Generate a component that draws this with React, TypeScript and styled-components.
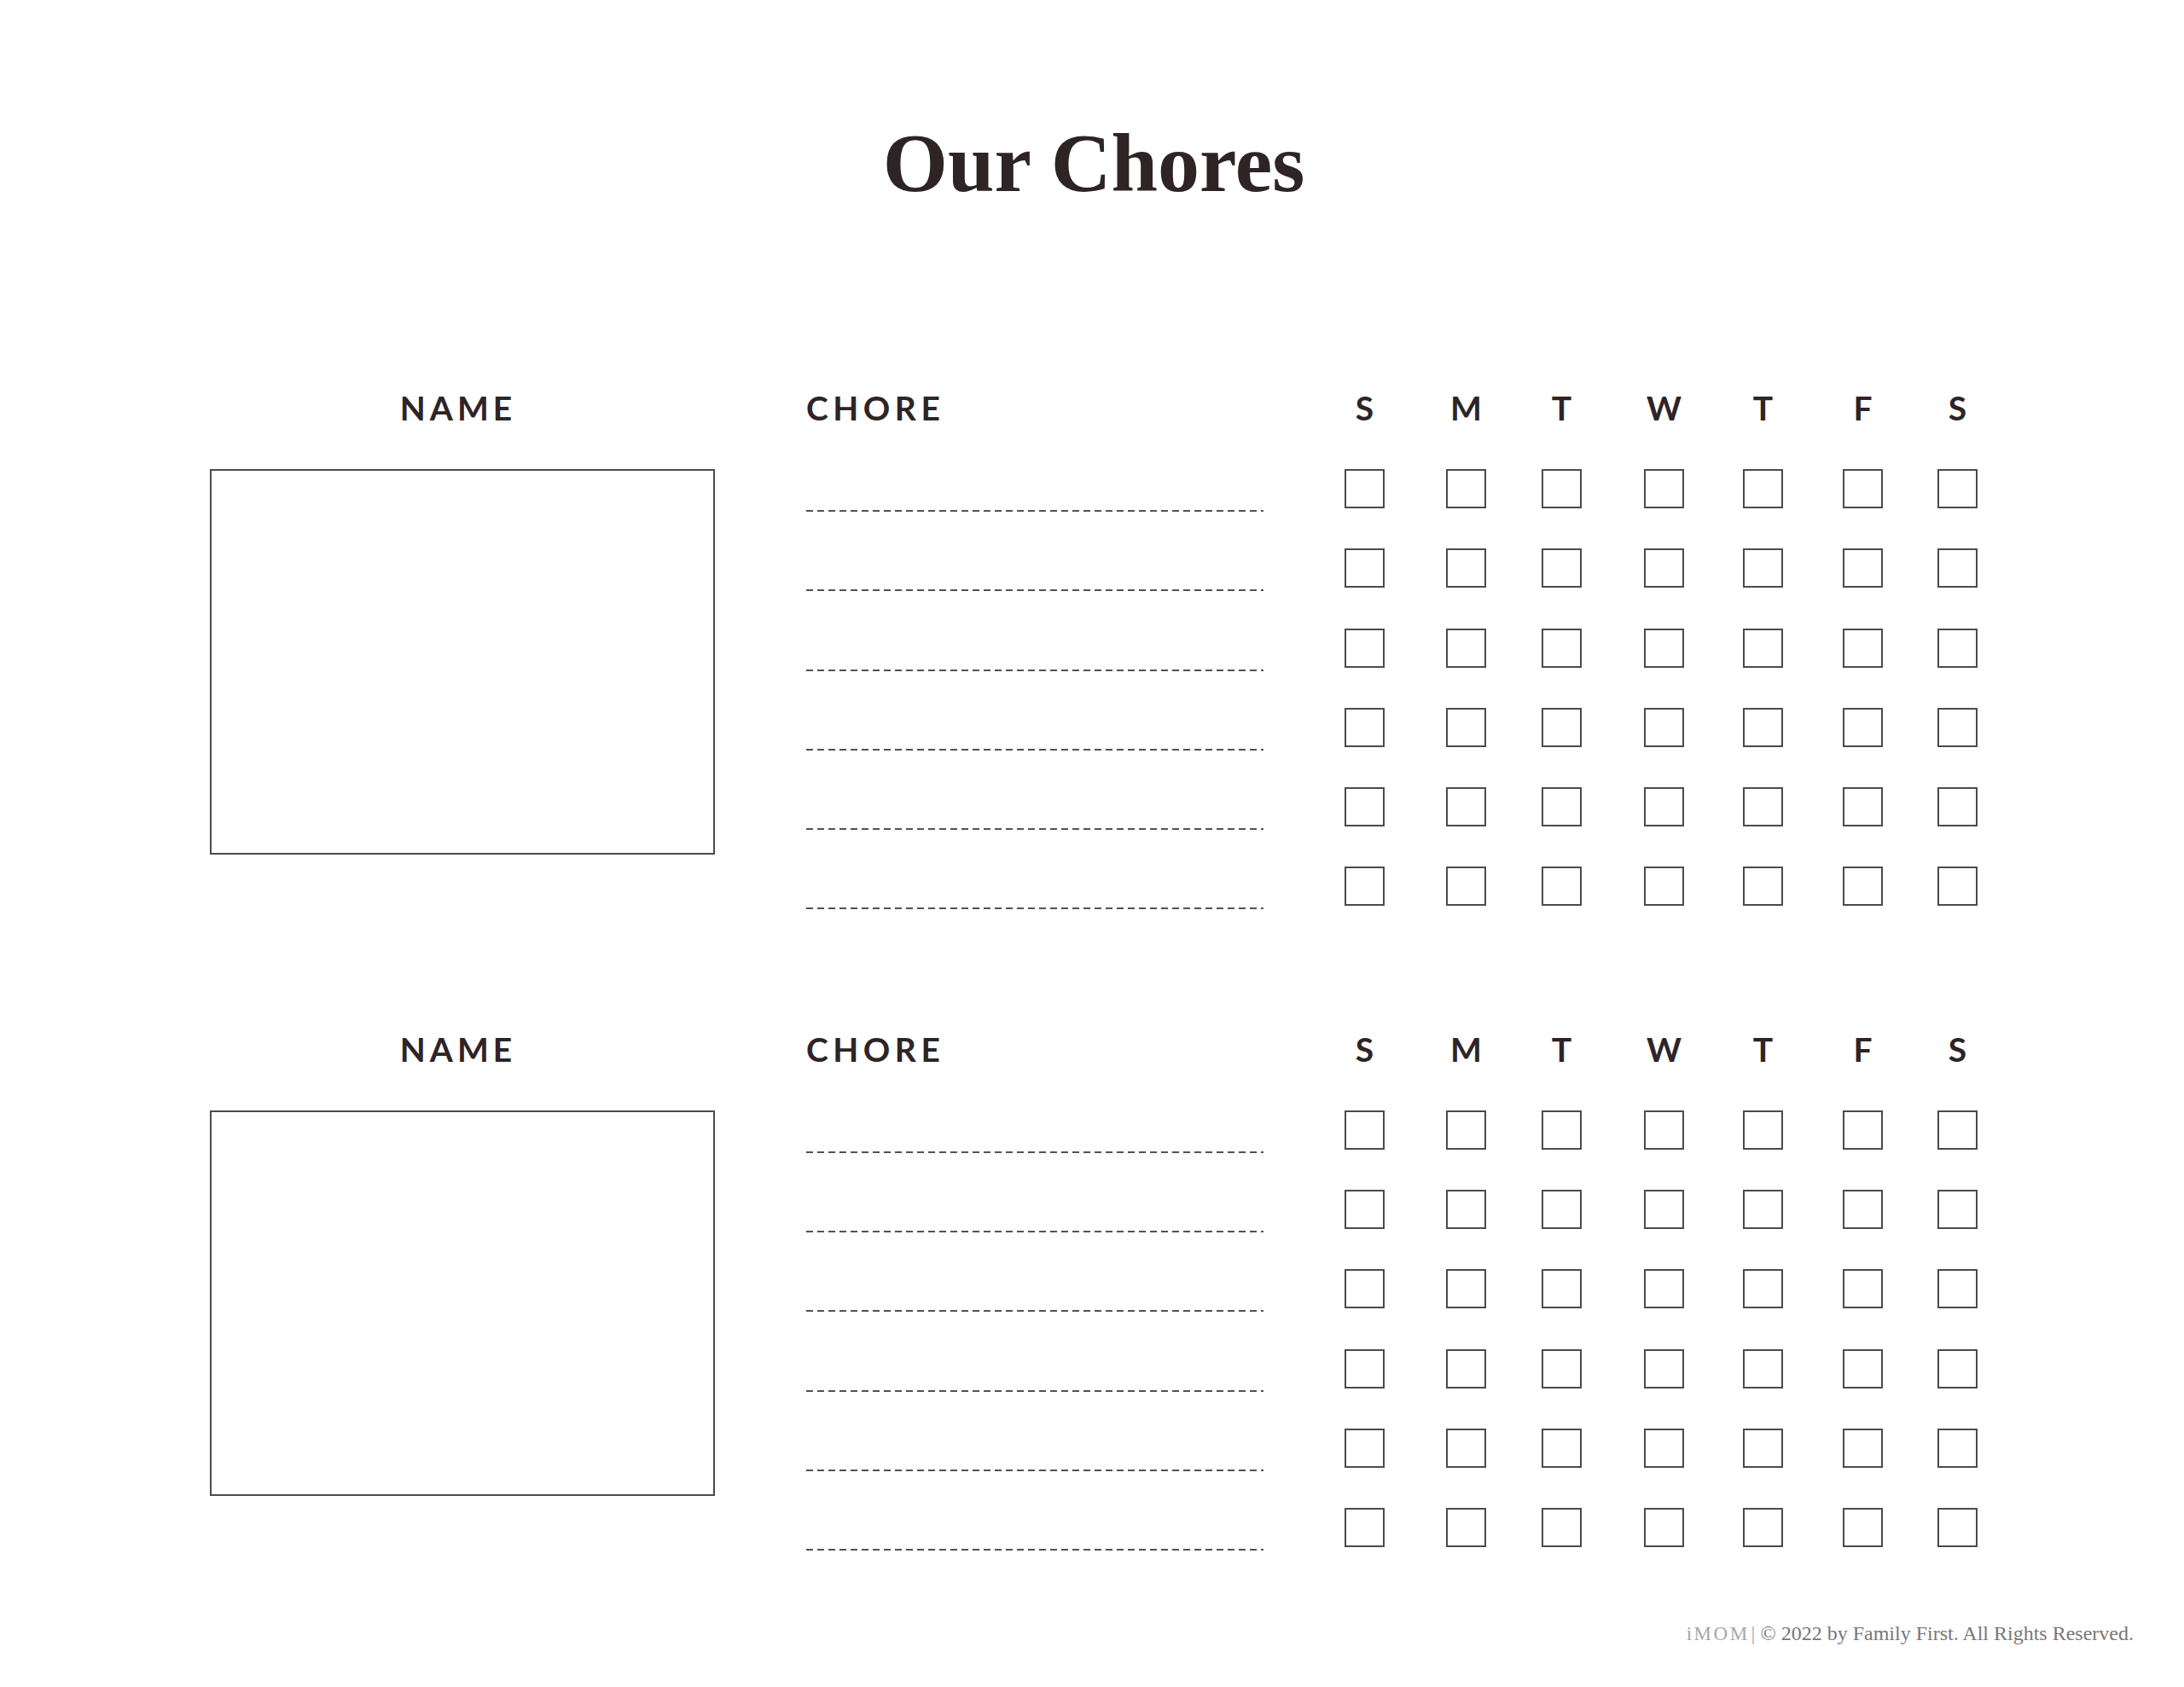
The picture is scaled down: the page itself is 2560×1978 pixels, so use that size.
import styled, { createGlobalStyle } from "styled-components";

const GlobalStyle = createGlobalStyle`
    html, body {
        margin: 0;
        padding: 0;
        background: #ffffff;
    }
`;

const Page = styled.div`
    width: 2560px;
    height: 1978px;
    box-sizing: border-box;
    padding-top: 142px;
    display: flex;
    flex-direction: column;
    background: #ffffff;
    color: #2e2426;
`;

const Title = styled.h1`
    margin: 0;
    font-family: "Liberation Serif", "DejaVu Serif", serif;
    font-weight: 700;
    font-size: 98px;
    line-height: 98px;
    text-align: center;
    padding-left: 4px;
    color: #2e2426;
`;

const Sections = styled.div`
    margin-top: 218px;
    display: flex;
    flex-direction: column;
    gap: 143.8px;
`;

const Section = styled.section`
    display: flex;
    padding-left: 246px;
`;

const Header = styled.div<{ $align?: string }>`
    height: 45px;
    line-height: 40px;
    font-family: Lato, "Open Sans", sans-serif;
    font-weight: 700;
    font-size: 39px;
    letter-spacing: 5.5px;
    text-align: ${p => p.$align || "left"};
    color: #2e2426;
`;

const NameHeader = styled(Header)`
    text-align: center;
    letter-spacing: 5px;
    padding-right: 10px;
`;

const NameColumn = styled.div`
    width: 592px;
    display: flex;
    flex-direction: column;
`;

const NameBox = styled.div`
    margin-top: 47.2px;
    height: 452px;
    box-sizing: border-box;
    border: 2px solid #4d4a4a;
`;

const ChoreColumn = styled.div`
    width: 536px;
    margin-left: 107px;
    display: flex;
    flex-direction: column;
`;

const ChoreList = styled.div`
    margin-top: 47.2px;
    display: flex;
    flex-direction: column;
    gap: 43.2px;
`;

const ChoreLine = styled.div`
    height: 50px;
    background-image: repeating-linear-gradient(to right, #555152 0 8px, transparent 8px 13px);
    background-size: 100% 2px;
    background-position: left bottom;
    background-repeat: no-repeat;
`;

const DaysGrid = styled.div`
    margin-left: 95px;
    display: grid;
    grid-template-columns: 119px 112px 120px 116px 117px 111px 47px;
    grid-template-rows: 45px repeat(6, 46px);
    row-gap: 47.2px;
    justify-items: start;
    align-content: start;
`;

const DayHeader = styled(Header)`
    width: 47px;
    text-align: center;
    letter-spacing: 0;
`;

const CheckBox = styled.div`
    width: 47px;
    height: 46px;
    box-sizing: border-box;
    border: 2px solid #4d4a4a;
`;

const Footer = styled.footer`
    margin-top: 85px;
    padding-right: 59px;
    text-align: right;
    font-family: "Liberation Serif", "DejaVu Serif", serif;
    font-size: 24px;
    line-height: 24px;
    color: #7a7677;
`;

const Brand = styled.span`
    color: #a9a6a7;
    letter-spacing: 2.5px;
    font-size: 23px;
`;

const Divider = styled.span`
    color: #a9a6a7;
    margin: 0 6px 0 2px;
`;

const DAYS = ["S", "M", "T", "W", "T", "F", "S"];
const ROWS = [0, 1, 2, 3, 4, 5];

function ChoreSection() {
    return <Section>
        <NameColumn>
            <NameHeader>NAME</NameHeader>
            <NameBox/>
        </NameColumn>
        <ChoreColumn>
            <Header>CHORE</Header>
            <ChoreList>
                {ROWS.map(r => <ChoreLine key={r}/>)}
            </ChoreList>
        </ChoreColumn>
        <DaysGrid>
            {DAYS.map((d, i) => <DayHeader key={"d" + i}>{d}</DayHeader>)}
            {ROWS.map(r => DAYS.map((_, i) => <CheckBox key={r + "-" + i}/>))}
        </DaysGrid>
    </Section>
}

export default function App() {
    return <Page>
        <GlobalStyle/>
        <Title>Our Chores</Title>
        <Sections>
            <ChoreSection/>
            <ChoreSection/>
        </Sections>
        <Footer>
            <Brand>iMOM</Brand>
            <Divider>|</Divider>
            © 2022 by Family First. All Rights Reserved.
        </Footer>
    </Page>
}
